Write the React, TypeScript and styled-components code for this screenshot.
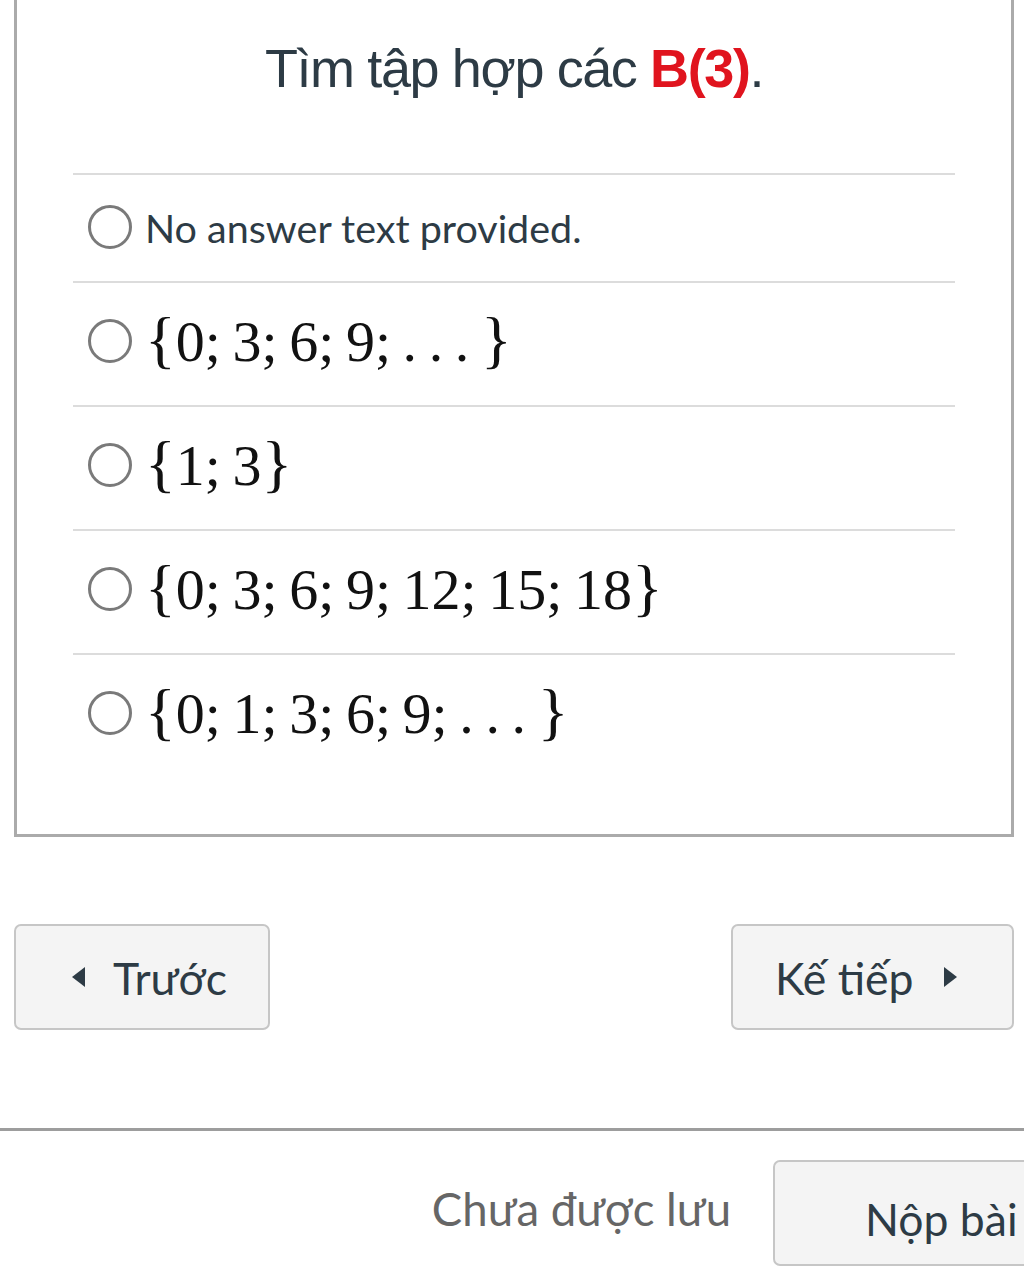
import React from "react";
import styled, { createGlobalStyle } from "styled-components";

const GlobalStyle = createGlobalStyle`
  html, body {
    margin: 0;
    padding: 0;
    background: #ffffff;
    overflow: hidden;
  }
  body {
    font-family: Lato, "Noto Sans", sans-serif;
    color: #2d3b45;
  }
  * { box-sizing: border-box; }
`;

const Page = styled.div`
  width: 1024px;
  display: flex;
  flex-direction: column;
`;

const Content = styled.div`
  padding: 0 10px 0 14px;
  display: flex;
  flex-direction: column;
`;

const Card = styled.section`
  border: 3px solid #ababab;
  border-top: none;
  padding: 36px 56px 57px 56px;
  display: flex;
  flex-direction: column;
`;

const Title = styled.h1`
  margin: 0 0 73px 0;
  font-family: "Liberation Sans", Arial, sans-serif;
  font-weight: 400;
  font-size: 54px;
  line-height: 64px;
  letter-spacing: -1.4px;
  text-align: center;
  color: #2d3b45;
`;

const Highlight = styled.strong`
  color: #e0141e;
  font-weight: 700;
`;

const AnswerList = styled.div`
  display: flex;
  flex-direction: column;
`;

const Answer = styled.label<{ $tall?: boolean }>`
  display: flex;
  align-items: center;
  gap: 13px;
  min-height: ${(p) => (p.$tall ? 124 : 108)}px;
  padding: 0 15px;
  border-top: 2px solid #dcdcdc;
  padding-bottom: ${(p) => (p.$tall ? 6 : 2)}px;
`;

const Radio = styled.span`
  flex: none;
  width: 44px;
  height: 44px;
  border-radius: 50%;
  border: 3px solid #7a7a7a;
  background: #ffffff;
`;

const AnswerText = styled.span`
  font-family: Lato, sans-serif;
  font-size: 39.5px;
  color: #2d3b45;
`;

const MathText = styled.span`
  font-family: "Liberation Serif", "Times New Roman", serif;
  font-size: 58px;
  line-height: 76px;
  color: #111111;
  white-space: pre;
`;

const Brace = styled.span`
  font-size: 64px;
`;

const Nav = styled.div`
  display: flex;
  justify-content: space-between;
  margin-top: 87px;
`;

const NavButton = styled.button<{ $w: number; $pl: number; $gap: number }>`
  width: ${(p) => p.$w}px;
  height: 106px;
  display: flex;
  align-items: center;
  gap: ${(p) => p.$gap}px;
  padding: 0 0 0 ${(p) => p.$pl}px;
  border: 2px solid #c6c6c6;
  border-radius: 7px;
  background: #f4f4f4;
  font-family: Lato, sans-serif;
  font-size: 44.5px;
  color: #2d3b45;
`;

const Caret = styled.svg`
  flex: none;
  width: 13px;
  height: 20px;
  fill: #2d3b45;
`;

const Divider = styled.hr`
  margin: 98px 0 0 0;
  border: none;
  height: 3px;
  background: #9d9d9d;
`;

const Footer = styled.div`
  width: calc(100% + 66px);
  display: flex;
  justify-content: flex-end;
  align-items: center;
  gap: 42px;
  padding-top: 29px;
`;

const Status = styled.span`
  font-family: Lato, sans-serif;
  font-size: 45.5px;
  color: #666666;
  padding-bottom: 10px;
`;

const SubmitButton = styled.button`
  width: 317px;
  height: 106px;
  padding: 10px 0 0 90px;
  text-align: left;
  border: 2px solid #c6c6c6;
  border-radius: 7px;
  background: #f4f4f4;
  font-family: Lato, sans-serif;
  font-size: 44.5px;
  color: #2d3b45;
`;

type Opt = { kind: "text" | "math"; value: string };

const options: Opt[] = [
  { kind: "text", value: "No answer text provided." },
  { kind: "math", value: "0;\u20093;\u20096;\u20099;\u2009.\u2009.\u2009.\u2009" },
  { kind: "math", value: "1;\u20093" },
  { kind: "math", value: "0;\u20093;\u20096;\u20099;\u200912;\u200915;\u200918" },
  { kind: "math", value: "0;\u20091;\u20093;\u20096;\u20099;\u2009.\u2009.\u2009.\u2009" },
];

export default function App() {
  return (
    <Page>
      <GlobalStyle />
      <Content>
        <Card>
          <Title>
            Tìm tập hợp các <Highlight>B(3)</Highlight>.
          </Title>
          <AnswerList>
            {options.map((o, i) => (
              <Answer key={i} $tall={o.kind === "math"}>
                <Radio />
                {o.kind === "text" ? (
                  <AnswerText>{o.value}</AnswerText>
                ) : (
                  <MathText>
                    <Brace>{"{"}</Brace>
                    {o.value}
                    <Brace>{"}"}</Brace>
                  </MathText>
                )}
              </Answer>
            ))}
          </AnswerList>
        </Card>
        <Nav>
          <NavButton $w={256} $pl={56} $gap={28}>
            <Caret viewBox="0 0 13 20">
              <polygon points="13,0 13,20 0,10" />
            </Caret>
            Trước
          </NavButton>
          <NavButton $w={283} $pl={42} $gap={30}>
            Kế tiếp
            <Caret viewBox="0 0 13 20">
              <polygon points="0,0 13,10 0,20" />
            </Caret>
          </NavButton>
        </Nav>
      </Content>
      <Divider />
      <Footer>
        <Status>Chưa được lưu</Status>
        <SubmitButton>Nộp bài</SubmitButton>
      </Footer>
    </Page>
  );
}
